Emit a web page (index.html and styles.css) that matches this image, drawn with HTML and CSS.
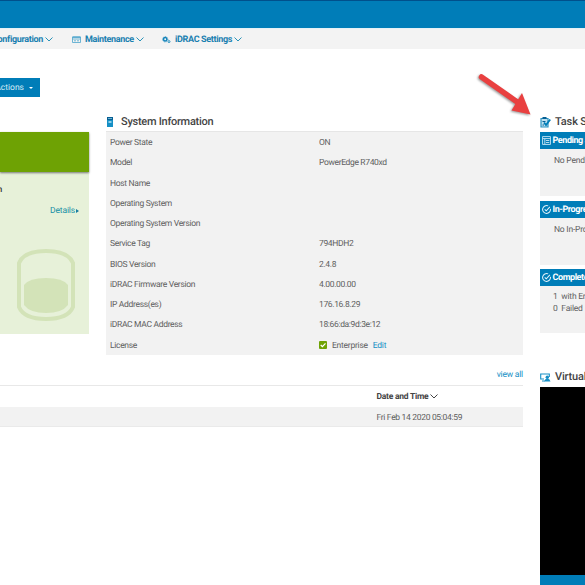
FILE: index.html
```
<!DOCTYPE html>
<html lang="en">
<head>
<meta charset="utf-8">
<title>iDRAC Dashboard</title>
<link rel="stylesheet" href="styles.css">
</head>
<body>
<div class="page">
  <header class="banner"></header>
  <nav class="nav">
    <div class="nav-item nav-config"><span>Configuration</span><svg class="chev" viewBox="0 0 8 5"><path d="M.5.5 4 4 7.500.5"/></svg></div>
    <div class="nav-item nav-maint"><svg class="nav-icon" viewBox="0 0 9 8"><path d="M.5 1h8v5.500h-8zM.5 3h8M2 4.800h2M5 4.800h2" fill="none" stroke="#4ba4cc" stroke-width=".8"/><path d="M.5.500h8v1.300h-8z" fill="#4ba4cc"/></svg><span>Maintenance</span><svg class="chev" viewBox="0 0 8 5"><path d="M.5.5 4 4 7.500.5"/></svg></div>
    <div class="nav-item nav-set"><svg class="nav-icon" viewBox="0 0 9 8"><circle cx="3.200" cy="3.300" r="1.700" fill="none" stroke="#1685bb" stroke-width="1.500"/><circle cx="3.200" cy="3.300" r="2.700" fill="none" stroke="#1685bb" stroke-width=".7" stroke-dasharray="1 1"/><circle cx="7" cy="5.600" r="1" fill="none" stroke="#2b93c2" stroke-width="1"/></svg><span>iDRAC Settings</span><svg class="chev" viewBox="0 0 8 5"><path d="M.5.5 4 4 7.500.5"/></svg></div>
  </nav>
  <div class="toolbar"><div class="button"><span>Actions</span><i class="caret"></i></div></div>

  <main class="columns">
    <div class="primary">
      <div class="upper">
        <section class="health">
          <div class="health-bar"></div>
          <div class="health-body">
            <div class="health-title">System Health</div>
            <div class="details"><span>Details</span><i class="tri"></i></div>
            <svg class="disk" viewBox="0 0 58 72"><path d="M2 14Q7 2 29 2T56 14V58Q51 70 29 70T2 58Z" fill="none" stroke="#d3e3b8" stroke-width="4"/><path d="M7 36Q12 29 29 29T51 36V56Q45 64 29 64T7 56Z" fill="#d3e3b8"/></svg>
          </div>
        </section>
        <section class="info">
          <h2 class="heading"><svg class="server" viewBox="0 0 6 10"><path d="M0 0h6v10H0z" fill="#168fc5"/><path d="M0 0h6v3H0z" fill="#075f93"/><path d="M1 1h4v.8H1zM1.500 4h3v2h-3z" fill="#8ed0ea"/></svg><span>System Information</span></h2>
          <dl class="facts">
            <dt>Power State</dt><dd>ON</dd>
            <dt>Model</dt><dd>PowerEdge R740xd</dd>
            <dt>Host Name</dt><dd></dd>
            <dt>Operating System</dt><dd></dd>
            <dt>Operating System Version</dt><dd></dd>
            <dt>Service Tag</dt><dd>794HDH2</dd>
            <dt>BIOS Version</dt><dd>2.4.8</dd>
            <dt>iDRAC Firmware Version</dt><dd>4.00.00.00</dd>
            <dt>IP Address(es)</dt><dd>176.16.8.29</dd>
            <dt>iDRAC MAC Address</dt><dd>18:66:da:9d:3e:12</dd>
            <dt>License</dt><dd class="license"><svg class="check" viewBox="0 0 8 8"><rect width="8" height="8" rx="1" fill="#6ea204"/><path d="M1.700 4 3.400 5.700 6.500 2.300" fill="none" stroke="#fff" stroke-width="1.200"/></svg><span>Enterprise</span><a class="edit">Edit</a></dd>
          </dl>
        </section>
      </div>
      <section class="log">
        <div class="log-top"><a>view all</a></div>
        <div class="log-head"><span>Date and Time</span><svg class="chev dark" viewBox="0 0 8 5"><path d="M.5.5 4 4 7.500.5"/></svg></div>
        <div class="log-row">Fri Feb 14 2020 05:04:59</div>
      </section>
    </div>

    <aside class="side">
      <h2 class="heading"><svg class="side-icon" viewBox="0 0 11 11"><path d="M1 1.500h7V10H1z" fill="#bfe1ef" stroke="#2b93c2" stroke-width="1.200"/><path d="M2.500 0h4v2h-4zM2.500 4h3v1h-3zM2.500 7.500h1.500v1h-1.500z" fill="#075f93"/><path d="M4 5.500 6 8 10.200 2.500" fill="none" stroke="#007db8" stroke-width="1.900"/></svg><span>Task Summary</span></h2>
      <div class="task">
        <div class="task-head"><svg class="task-icon" viewBox="0 0 8 8"><path d="M.5.500h7v7h-7zM.5 2.300h7M2.500 2.300v5M3.500 4h3M3.500 5.800h3" fill="none" stroke="#c7e6f5" stroke-width=".8"/></svg><span>Pending Jobs</span></div>
        <div class="task-body">No Pending Jobs</div>
      </div>
      <div class="task">
        <div class="task-head"><svg class="task-icon" viewBox="0 0 8 8"><path d="M7.500 3.500A3.500 3.500 0 1 1 5.500.800M2.400 3.800 3.800 5.200 7 1.700" fill="none" stroke="#e4f4fb" stroke-width=".9"/></svg><span>In-Progress Jobs</span></div>
        <div class="task-body">No In-Progress Jobs</div>
      </div>
      <div class="task last">
        <div class="task-head"><svg class="task-icon" viewBox="0 0 8 8"><path d="M7.500 3.500A3.500 3.500 0 1 1 5.500.800M2.400 3.800 3.800 5.200 7 1.700" fill="none" stroke="#e4f4fb" stroke-width=".9"/></svg><span>Completed Jobs</span></div>
        <div class="task-body"><div>1 &nbsp;with Errors</div><div>0 &nbsp;Failed</div></div>
      </div>
      <h2 class="heading console-title"><svg class="side-icon" viewBox="0 0 11 11"><path d="M4 7H.7V2h8.600v3M2 9h3" fill="none" stroke="#168fc5" stroke-width="1.100"/><circle cx="7.300" cy="5.300" r="1.700" fill="#168fc5"/><path d="M4.500 9.500Q5 6.500 7.300 6.500T10.500 9.500Z" fill="#168fc5"/></svg><span>Virtual Console</span></h2>
      <div class="console"></div>
      <div class="console-foot"></div>
    </aside>
  </main>

  <svg class="arrow" viewBox="0 0 56 48"><path d="M3.500 4 38.500 28.500" stroke="#e94040" stroke-width="5.500" stroke-linecap="round"/><path d="M44 20 33.500 37.500 52.500 41.500Z" fill="#e94040"/></svg>
</div>
</body>
</html>
```
FILE: styles.css
```
* { box-sizing: border-box; margin: 0; padding: 0; }
body { background: #fff; }
.page {
  position: relative;
  width: 585px;
  height: 585px;
  overflow: hidden;
  font: 8.500px/12px Roboto, sans-serif;
  letter-spacing: -.32px;
  text-rendering: geometricPrecision;
  color: #606060;
}
svg { display: block; flex: none; }
span, a { white-space: nowrap; }
a { color: #168fc5; }

.banner { height: 28px; background: #007db8; border-top: 1px solid #00508c; }
.nav {
  display: flex;
  align-items: center;
  height: 21px;
  padding-top: 2px;
  background: #f3f3f3;
  border-top: 1px solid #e5f1f6;
  color: #1a80b0;
  font-size: 9px;
  letter-spacing: -.33px;
  font-weight: 700;
}
.nav-item { display: flex; align-items: center; flex: none; }
.nav-config { width: 53px; justify-content: flex-end; margin-right: 19px; }
.nav-maint { width: 90px; }
.nav-icon { width: 9px; height: 8px; margin-right: 4px; }
.chev { width: 8px; height: 5px; margin: -1px 0 0 2px; fill: none; stroke: #2b93b8; stroke-width: 1; }
.chev.dark { stroke: #444; }

.toolbar { height: 63px; padding-top: 29px; }
.button {
  display: flex;
  align-items: center;
  justify-content: flex-end;
  width: 40px;
  height: 19px;
  padding: 1px 7px 0 0;
  background: #007db8;
  color: #d9edf7;
  letter-spacing: 0;
}
.caret { margin-left: 5px; border: 2px solid transparent; border-top-color: #fff; border-bottom: 0; }

.columns { display: flex; }
.primary { width: 523px; flex: none; margin-right: 17px; }
.upper { display: flex; height: 243px; }
.health { width: 89px; flex: none; margin: 20px 17px 0 0; }
.health-bar { position: relative; height: 40px; background: #6ea204; box-shadow: 0 1px 2px #777; }
.health-body { height: 162px; padding: 12px 10px 0 0; background: #e7f1d9; }
.health-title { display: flex; width: 2px; justify-content: flex-end; white-space: nowrap; color: #333; font-weight: 500; }
.details { display: flex; justify-content: flex-end; align-items: center; height: 12px; margin-top: 9px; color: #168fa5; letter-spacing: -.15px; }
.tri { margin-left: 1px; border: 2.500px solid transparent; border-left: 3px solid #167ba0; border-right: 0; }
.disk { width: 58px; height: 72px; margin: 32px 0 0 17px; }

.heading { display: flex; align-items: center; height: 19px; padding-top: 1px; font-size: 11px; font-weight: 500; color: #444; }
.info { width: 417px; }
.server { width: 6px; height: 10px; margin: 0 8px 0 1px; }
.info .heading { letter-spacing: -.27px; }
.facts {
  display: grid;
  grid-template-columns: 209px 1fr;
  grid-auto-rows: 20.250px;
  align-items: center;
  height: 224px;
  padding: 1px 4px 0;
  background: #f2f2f2;
  border-top: 1px solid #e6e6e6;
}
dd { letter-spacing: -.35px; }
.license { display: flex; align-items: center; letter-spacing: -.25px; }
.check { width: 8px; height: 8px; margin: -1px 5px 0 0; }
.edit { margin-left: 5px; }

.log-top { display: flex; justify-content: flex-end; align-items: center; height: 31px; padding-top: 10px; border-bottom: 1px solid #e8e8e8; letter-spacing: -.2px; }
.log-head { display: flex; align-items: center; height: 21px; padding: 1px 0 0 376.500px; color: #444; font-weight: 700; letter-spacing: -.25px; }
.log-row { height: 20px; padding: 1px 0 0 376.500px; line-height: 20px; background: #f2f2f2; border-bottom: 1px solid #eaeaea; }

.side { width: 150px; flex: none; }
.side-icon { width: 11px; height: 11px; margin-right: 4px; }
.side .heading { height: 20px; padding-top: 0; letter-spacing: -.15px; }
.task { height: 68.500px; }
.task-head { display: flex; align-items: center; height: 17px; padding: 1px 0 0 2px; background: #007db8; color: #fff; font-weight: 700; font-size: 9px; letter-spacing: -.42px; }
.task-icon { width: 9px; height: 9px; margin: -1px 1.500px 0 0; }
.task-body { height: 47px; padding: 6px 0 0 14px; background: #f2f2f2; white-space: nowrap; letter-spacing: -.22px; }
.last .task-body { padding-left: 13px; line-height: 11.500px; }
.side .console-title { height: 19px; margin-top: 30px; }
.console { height: 188px; background: #000; }
.console-foot { height: 12px; background: #007db8; }

.arrow { position: absolute; left: 478px; top: 73px; width: 56px; height: 48px; filter: drop-shadow(-1px 1px 1px #0006); }
```
